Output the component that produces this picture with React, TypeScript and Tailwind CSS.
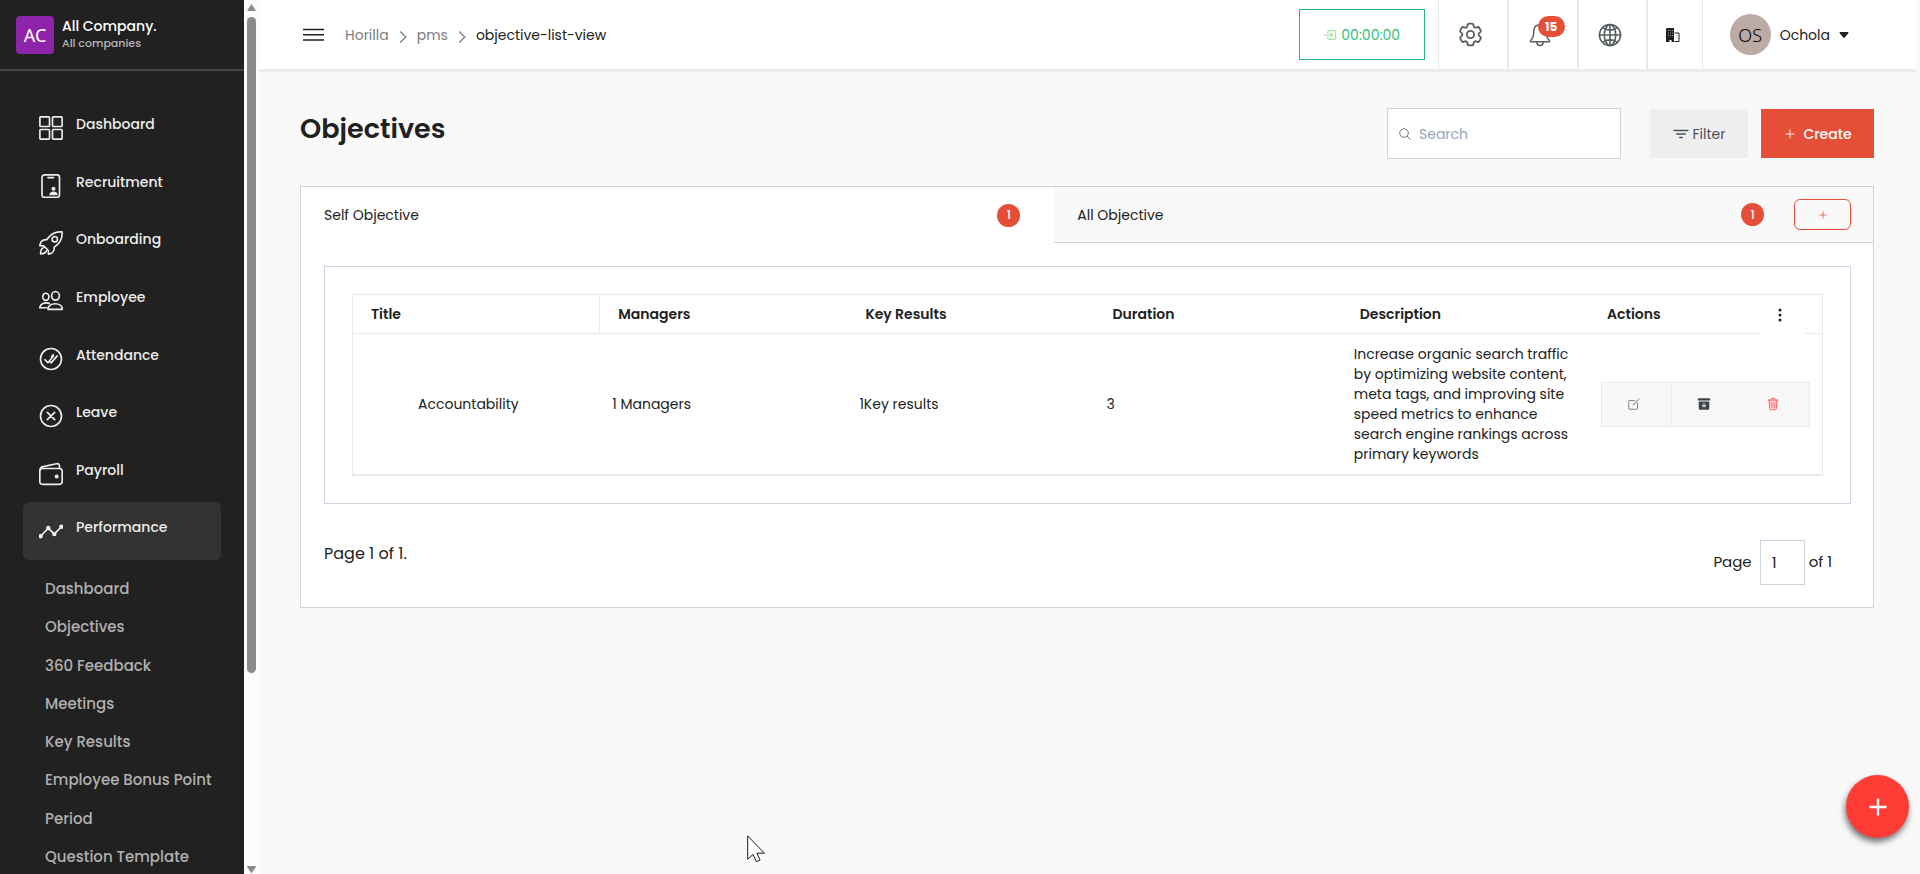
import React from 'react';
import {
  IoAdd,
  IoArchive,
  IoCaretDown,
  IoCreateOutline,
  IoEllipsisVertical,
  IoEnterOutline,
  IoFilter,
  IoGlobeOutline,
  IoSearchOutline,
  IoTrashOutline,
} from 'react-icons/io5';
import { HiOutlineCog6Tooth } from 'react-icons/hi2';

interface IconProps {
  children: React.ReactNode;
}

const MenuIcon: React.FC<IconProps> = ({ children }) => (
  <svg
    viewBox="0 0 24 24"
    className="h-6 w-6 shrink-0"
    fill="none"
    stroke="currentColor"
    strokeWidth="1.65"
    strokeLinecap="round"
    strokeLinejoin="round"
    aria-hidden="true"
  >
    {children}
  </svg>
);

const menu = [
  {
    label: 'Dashboard',
    icon: (
      <>
        <rect x="0.9" y="0.9" width="9.6" height="9.6" rx="0.8" />
        <rect x="13.5" y="0.9" width="9.6" height="9.6" rx="0.8" />
        <rect x="0.9" y="13.5" width="9.6" height="9.6" rx="0.8" />
        <rect x="13.5" y="13.5" width="9.6" height="9.6" rx="0.8" />
      </>
    ),
  },
  {
    label: 'Recruitment',
    icon: (
      <>
        <rect x="3" y="0.9" width="17.5" height="22.5" rx="2.5" />
        <path d="M9 3.6h5.5" />
        <circle cx="14.5" cy="14.8" r="2" fill="currentColor" stroke="none" />
        <path d="M10.3 21.3c0-2.600 1.700-3.800 4.200-3.800s4.200 1.200 4.200 3.800z" fill="currentColor" stroke="none" />
      </>
    ),
  },
  {
    label: 'Onboarding',
    icon: (
      <>
        <path d="M23 .9c-5.200-.5-9.600 1.200-12.800 4.800L7.800 8.600c-2.500-.2-4.600.7-6 2.700L.8 14.600l3.900.3 4.600 4.600.1 3.600 3.300-.9c2-1.500 2.800-3.600 2.500-6l2.900-2.400C21.700 10.600 23.500 6.200 23 .9z" />
        <circle cx="15.8" cy="8.2" r="2.7" />
        <path d="M4.300 16.800c-2 .8-2.800 3.200-2.700 6.100 2.800 0 5-.8 5.800-3" />
      </>
    ),
  },
  {
    label: 'Employee',
    icon: (
      <>
        <ellipse cx="16.5" cy="6.8" rx="3.9" ry="4.3" />
        <ellipse cx="6.8" cy="7.8" rx="3.1" ry="3.6" />
        <path d="M8.900 20.300c0-3.500 3.400-5.600 7.300-5.600s7.200 2.100 7.200 5.600z" />
        <path d="M10.300 14.400c-4.600-1.300-9.100.3-9.600 4.300h6.500" />
      </>
    ),
  },
  {
    label: 'Attendance',
    icon: (
      <>
        <circle cx="12" cy="12" r="10.5" />
        <path d="M6 12.700l2.900 3 5.600-6.700M10.800 14.500l1.400 1.400 6-7M12.500 9.700l1.700-2" />
      </>
    ),
  },
  {
    label: 'Leave',
    icon: (
      <>
        <circle cx="12" cy="12" r="10.5" />
        <path d="M8.300 8.300l7.400 7.400M15.700 8.300l-7.400 7.400" />
      </>
    ),
  },
  {
    label: 'Payroll',
    icon: (
      <>
        <rect x="0.8" y="6.5" width="22.4" height="15.8" rx="2.8" />
        <path d="M1 8.500c0-2.400 1-3.500 3-3.900l13.500-2.900c2-.3 3 .8 3 2.600v2" />
        <circle cx="17.7" cy="14.4" r="1.2" fill="currentColor" />
      </>
    ),
  },
  {
    label: 'Performance',
    active: true,
    icon: (
      <>
        <path d="M1.500 17.200l7.800-8.100 6 6 7-7.300" />
        <circle cx="1.6" cy="17.2" r="1.4" fill="currentColor" />
        <circle cx="9.3" cy="9" r="1.4" fill="currentColor" />
        <circle cx="15.3" cy="15.1" r="1.4" fill="currentColor" />
        <circle cx="22.4" cy="7.7" r="1.4" fill="currentColor" />
      </>
    ),
  },
];

const subMenu = [
  'Dashboard',
  'Objectives',
  '360 Feedback',
  'Meetings',
  'Key Results',
  'Employee Bonus Point',
  'Period',
  'Question Template',
];

const Sidebar: React.FC = () => (
  <aside className="flex w-[244px] shrink-0 flex-col overflow-hidden bg-[#212121]">
    <div className="flex h-[71px] shrink-0 items-center gap-2 border-b-2 border-[#464646] px-4">
      <div className="flex h-[38px] w-[38px] items-center justify-center rounded bg-[#8e24aa] font-['Noto_Sans',sans-serif] text-lg text-white">
        AC
      </div>
      <div className="pb-0.5 text-white">
        <p className="text-sm leading-[18px] font-medium">All Company.</p>
        <p className="text-[11px] leading-4 font-medium text-[#b8b8b8]">All companies</p>
      </div>
    </div>
    <nav className="pt-7" aria-label="Main menu">
      <ul className="grid h-[461px] grid-rows-8 px-[23px]">
        {menu.map((item) => (
          <li key={item.label}>
            <a
              href="#"
              className={`flex h-full gap-[13px] rounded-md px-4 pt-[15px] text-[#ededed] ${item.active ? 'bg-[#333333]' : ''}`}
            >
              <span className="pt-0.5">
                <MenuIcon>{item.icon}</MenuIcon>
              </span>
              <span className="text-sm leading-5 font-medium">{item.label}</span>
            </a>
          </li>
        ))}
      </ul>
      <ul className="grid h-[316px] grid-rows-8 pt-[10px] pl-[45px]">
        {subMenu.map((label) => (
          <li key={label} className="flex items-center">
            <a href="#" className="text-[15px] leading-9 font-medium whitespace-nowrap text-[#b0b0b0]">
              {label}
            </a>
          </li>
        ))}
      </ul>
    </nav>
  </aside>
);

const SidebarScroll: React.FC = () => (
  <div className="flex w-[15px] shrink-0 flex-col items-center bg-[#fcfcfc] text-[#8b8b8b]" aria-hidden="true">
    <svg viewBox="0 0 15 17" className="h-[17px] w-[15px] shrink-0" fill="currentColor">
      <path d="M7.500 4l4 6v1h-8v-1z" />
    </svg>
    <div className="h-3/4 w-[9px] rounded-full bg-[#8b8b8b]" />
    <svg viewBox="0 0 15 10" className="mt-auto h-[10px] w-[15px] shrink-0" fill="currentColor">
      <path d="M3.200 2h8.600v1l-4 6h-.6l-4-6z" />
    </svg>
  </div>
);

const Separator: React.FC = () => (
  <svg
    viewBox="0 0 8 14"
    className="mx-0.5 mt-1 h-3.5 w-2"
    fill="none"
    stroke="#7d7d7d"
    strokeWidth="1.3"
    aria-hidden="true"
  >
    <path d="M1.200 1.500l5.600 5.500-5.600 5.500" />
  </svg>
);

const Header: React.FC = () => (
  <header className="mr-1 flex h-[72px] border-b-3 border-[#ececec] bg-white pr-[65px] text-[#212121]">
    <button type="button" aria-label="Toggle menu" className="pl-11">
      <svg viewBox="0 0 21 14" className="h-[14px] w-[21px]" stroke="currentColor" strokeWidth="1.6">
        <path d="M0 1.500h21M0 6.800h21M0 12h21" />
      </svg>
    </button>
    <nav className="flex items-center gap-2 pl-[21px] text-sm" aria-label="Breadcrumb">
      <a href="#" className="text-[#7d7d7d]">Horilla</a>
      <Separator />
      <a href="#" className="text-[#7d7d7d]">pms</a>
      <Separator />
      <a href="#">objective-list-view</a>
    </nav>
    <div className="ml-auto flex">
      <button
        type="button"
        className="mt-[9px] mr-[13px] flex h-[51px] w-[126px] items-center justify-center gap-1 border border-[#28b779] text-sm text-[#2fc077]"
      >
        <IoEnterOutline className="h-3.5 w-3.5 text-[#7ed487]" />
        00:00:00
      </button>
      <button type="button" aria-label="Settings" className="flex w-[69px] items-center justify-center border-l border-[#e8e8e8] pr-1">
        <HiOutlineCog6Tooth className="h-[29px] w-[29px] text-[#5a5f62]" />
      </button>
      <button type="button" aria-label="Notifications" className="relative flex w-[70px] items-center justify-center border-l-2 border-[#e8e8e8] pr-1">
        <svg viewBox="0 0 24 24" className="h-6 w-6" fill="none" stroke="#5a5f62" strokeWidth="1.5" strokeLinejoin="round">
          <path d="M11 1.500c-4 .3-6.200 3-6.200 6.700 0 5-.8 7.300-3.300 9.300v1.200h19v-1.200c-2.500-2-3.300-4.300-3.300-9.300 0-3.700-2.200-6.400-6.200-6.700z" />
          <path d="M7.700 18.900c.2 2.200 1.500 3.500 3.300 3.500s3.100-1.300 3.300-3.500" />
        </svg>
        <span className="absolute top-4 right-3 flex h-[21px] w-[27px] items-center justify-center rounded-full bg-[#e54f38] text-xs font-bold text-white">
          15
        </span>
      </button>
      <button type="button" aria-label="Language" className="flex w-[69px] items-center justify-center border-l-2 border-[#e8e8e8] pr-1">
        <IoGlobeOutline className="h-[26px] w-[26px] text-[#5a5f62]" />
      </button>
      <button type="button" aria-label="Company" className="flex w-[56px] items-center justify-center border-l-2 border-[#e8e8e8] pr-1">
        <svg viewBox="0 0 14 14" className="h-3.5 w-3.5" fill="currentColor">
          <path d="M1 0h7v14H5.500v-2h-2v2H0V1z" />
          <path d="M8.500 5H13v8.500H8.500" fill="none" stroke="currentColor" />
          <path d="M2 2.500h1M4 2.500h1M6 2.500h1M2 5h1M4 5h1M6 5h1M2 7.500h1M4 7.500h1M6 7.500h1M10.300 7.500h1M10.300 10h1" stroke="#9a9a9a" />
        </svg>
      </button>
      <button type="button" className="flex items-center border-l border-[#e8e8e8] pl-[27px] text-sm">
        <span className="flex h-[41px] w-[41px] items-center justify-center rounded-full bg-[#bcaaa4] font-['Noto_Sans',sans-serif] text-lg font-light text-black">
          OS
        </span>
        <span className="pl-[9px]">Ochola</span>
        <IoCaretDown className="ml-[7px] h-3.5 w-3.5" />
      </button>
    </div>
  </header>
);

const CountBadge: React.FC = () => (
  <span className="flex h-[23px] w-[23px] items-center justify-center rounded-full bg-[#e54f38] text-xs font-medium text-white">
    1
  </span>
);

const Toolbar: React.FC = () => (
  <div className="flex items-start pt-9">
    <h1 className="pt-[3px] text-[27px] leading-9 font-semibold">Objectives</h1>
    <label className="ml-auto flex h-[51px] w-[234px] items-center gap-[7px] border border-[#cbd5e1] bg-white px-[10px]">
      <IoSearchOutline className="h-3.5 w-3.5 shrink-0 text-[#5f6368]" />
      <input
        type="text"
        placeholder="Search"
        aria-label="Search"
        className="w-full min-w-0 text-sm outline-none placeholder:text-[#94a3b8]"
      />
    </label>
    <button type="button" className="mt-px ml-[29px] flex h-[49px] w-[98px] items-center justify-center gap-1 bg-[#efefef] text-sm text-[#4b4f58]">
      <IoFilter className="h-4 w-4" />
      Filter
    </button>
    <button type="button" className="mt-px ml-[13px] flex h-[49px] w-[113px] items-center justify-center gap-1.5 bg-[#e54f38] text-sm font-medium text-white">
      <IoAdd className="h-3.5 w-3.5" />
      Create
    </button>
  </div>
);

const columns = ['Title', 'Managers', 'Key Results', 'Duration', 'Description'];

const ObjectiveTable: React.FC = () => (
  <table className="w-full table-fixed border-separate border-spacing-0 border border-b-2 border-[#e7eaee] text-left text-sm">
    <colgroup>
      {columns.map((name) => (
        <col key={name} />
      ))}
      <col className="w-[233px]" />
    </colgroup>
    <thead>
      <tr>
        {columns.map((name) => (
          <th
            key={name}
            className="h-[39px] border-b border-[#e7eaee] px-[18px] font-semibold first:border-r"
          >
            {name}
          </th>
        ))}
        <th className="h-[39px] pl-0 font-semibold">
          <div className="flex h-full items-stretch">
            <span className="flex flex-1 items-center border-b border-[#e7eaee] pl-[18px]">Actions</span>
            <button type="button" aria-label="Choose columns" className="flex w-11 items-center justify-center pr-1.5">
              <IoEllipsisVertical className="h-4 w-4" />
            </button>
            <span className="w-[17px] border-b border-[#e7eaee]" />
          </div>
        </th>
      </tr>
    </thead>
    <tbody>
      <tr>
        <td className="py-[10px] pl-[65px]">Accountability</td>
        <td className="pl-3">1 Managers</td>
        <td className="pl-3">1Key results</td>
        <td className="pl-3">3</td>
        <td className="py-[10px] pl-3 leading-5">
          Increase organic search traffic by optimizing website content, meta tags, and improving site speed
          metrics to enhance search engine rankings across primary keywords
        </td>
        <td className="px-3">
          <div className="flex h-[45px] border border-[#e7eaee] bg-[#f8f8f8]">
            <button type="button" aria-label="Edit" className="flex flex-1 items-center justify-center border-r border-[#e7eaee] pr-1">
              <IoCreateOutline className="h-3.5 w-3.5 text-[#6b7078]" />
            </button>
            <button type="button" aria-label="Archive" className="flex flex-1 items-center justify-center pr-1">
              <IoArchive className="h-3.5 w-3.5 text-[#3d424b]" />
            </button>
            <button type="button" aria-label="Delete" className="flex flex-1 items-center justify-center pr-1">
              <IoTrashOutline className="h-3.5 w-3.5 text-[#ff4a4a]" />
            </button>
          </div>
        </td>
      </tr>
    </tbody>
  </table>
);

const App: React.FC = () => {
  return (
    <div className="flex h-screen overflow-hidden bg-[#f9f9f9] font-['Poppins','Inter',sans-serif] text-[#212121]">
      <Sidebar />
      <SidebarScroll />
      <div className="min-w-0 flex-1">
        <Header />
        <main className="pr-[46px] pl-[41px]">
          <Toolbar />
          <section className="mt-[27px] border border-[#cbd5e1] bg-white">
            {/* Tabs */}
            <div className="grid h-[56px] grid-cols-[23fr_25fr] text-sm">
              <div className="flex items-center justify-between pr-[34px] pl-[23px]">
                <button type="button">Self Objective</button>
                <CountBadge />
              </div>
              <div className="flex items-center border-b border-[#cbd5e1] bg-[#f9f9f9] pr-[22px] pl-[23px]">
                <button type="button">All Objective</button>
                <span className="mr-[30px] ml-auto">
                  <CountBadge />
                </span>
                <button type="button" aria-label="Add tab" className="flex h-[31px] w-[57px] items-center justify-center rounded-md border border-[#e54f38] text-[#e54f38]">
                  <IoAdd className="h-3 w-3" />
                </button>
              </div>
            </div>

            <div className="pt-[23px] pr-[22px] pb-[22px] pl-[23px]">
              <div className="border border-[#cbd5e1] p-[27px]">
                <ObjectiveTable />
              </div>
              {/* Pagination */}
              <div className="flex items-start justify-between pt-9 pr-[19px] text-base">
                <span className="leading-7">Page 1 of 1.</span>
                <label className="flex items-center gap-1 text-[15px]">
                  <span className="pr-1">Page</span>
                  <input
                    type="text"
                    defaultValue="1"
                    aria-label="Page number"
                    className="h-[45px] w-[45px] border border-[#cbd5e1] px-[11px] outline-none"
                  />
                  of 1
                </label>
              </div>
            </div>
          </section>
        </main>
      </div>

      <button
        type="button"
        aria-label="Quick actions"
        className="fixed right-[11px] bottom-[36px] flex h-[63px] w-[63px] items-center justify-center rounded-full bg-[#ff3b36] text-white shadow-[-1px_4px_6px_rgba(0,0,0,0.55)]"
      >
        <svg viewBox="0 0 18 18" className="h-[18px] w-[18px]" stroke="currentColor" strokeWidth="2.4">
          <path d="M9 .5v17M.5 9h17" />
        </svg>
      </button>

      {/* Mouse pointer */}
      <svg viewBox="0 0 19 28" className="pointer-events-none fixed top-[835px] left-[747px] h-7 w-[19px]" fill="#fff" stroke="#1b1b2a" aria-hidden="true">
        <path d="M.7.900v23.300l5.300-4.800 3.300 7.200 3.800-1.600-3.200-6.800h7.500z" />
      </svg>
    </div>
  );
};

export default App;
